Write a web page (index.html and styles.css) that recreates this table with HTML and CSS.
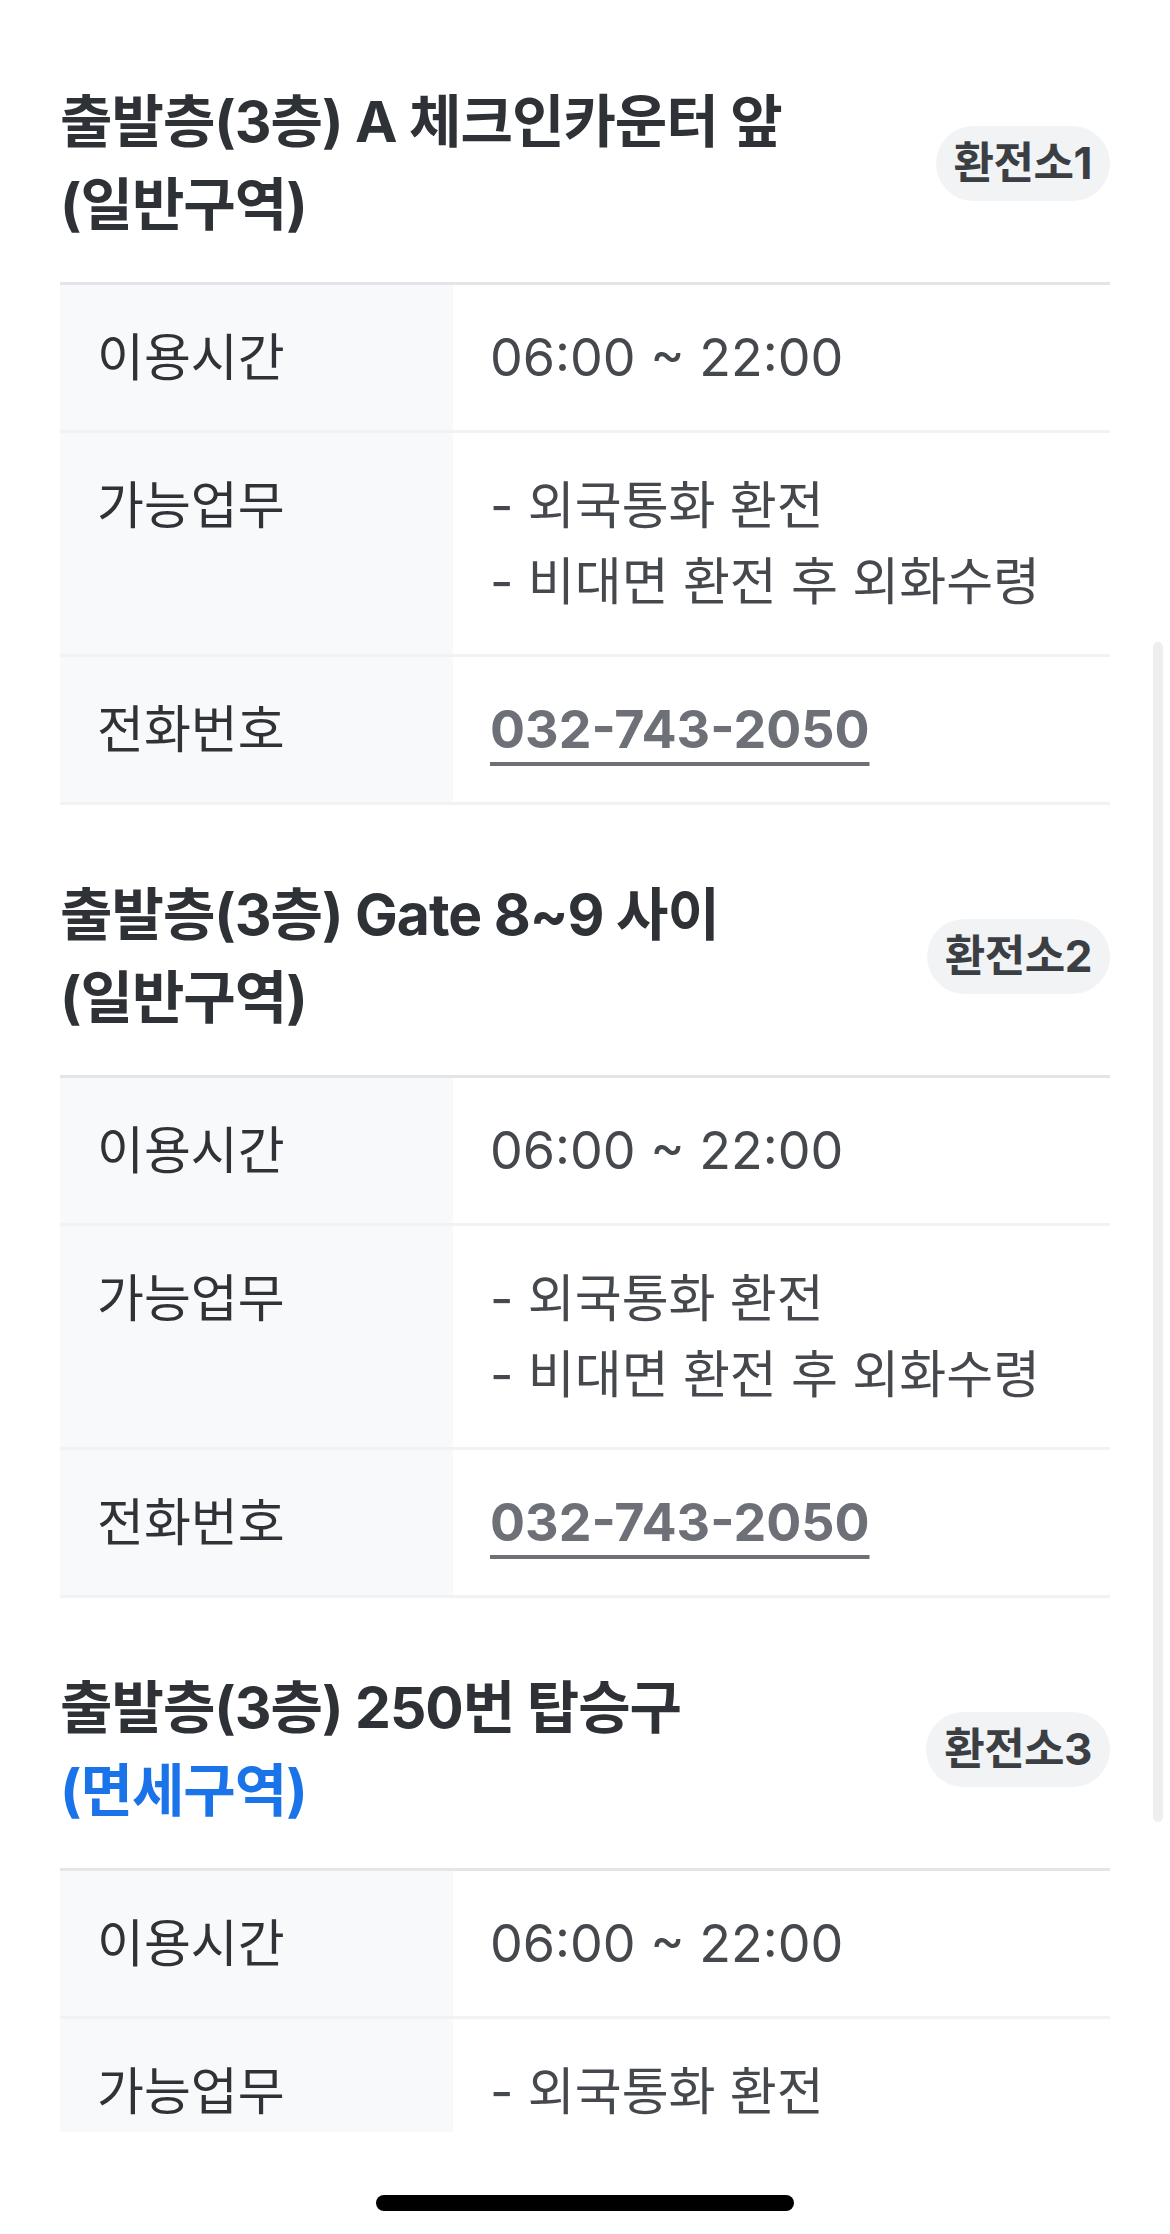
FILE: index.html
```html
<!DOCTYPE html>
<html lang="ko">
  <head>
    <meta charset="UTF-8" />
    <meta name="viewport" content="width=device-width, initial-scale=1.0" />
    <title>환전소 안내</title>
    <link rel="stylesheet" href="styles.css">
  </head>
  <body>
    <main class="page">
      <section class="exchange">
        <div class="exchange-head">
          <h2 class="exchange-title">출발층(3층) A 체크인카운터 앞 <span class="zone">(일반구역)</span></h2>
          <span class="badge">환전소1</span>
        </div>
        <table class="info">
          <tr>
            <th>이용시간</th>
            <td><span class="num">06:00 ~ 22:00</span></td>
          </tr>
          <tr>
            <th>가능업무</th>
            <td>- 외국통화 환전<br />- 비대면 환전 후 외화수령</td>
          </tr>
          <tr>
            <th>전화번호</th>
            <td><a class="tel num" href="tel:032-743-2050">032-743-2050</a></td>
          </tr>
        </table>
      </section>

      <section class="exchange">
        <div class="exchange-head">
          <h2 class="exchange-title">출발층(3층) Gate 8~9 사이 <span class="zone">(일반구역)</span></h2>
          <span class="badge">환전소2</span>
        </div>
        <table class="info">
          <tr>
            <th>이용시간</th>
            <td><span class="num">06:00 ~ 22:00</span></td>
          </tr>
          <tr>
            <th>가능업무</th>
            <td>- 외국통화 환전<br />- 비대면 환전 후 외화수령</td>
          </tr>
          <tr>
            <th>전화번호</th>
            <td><a class="tel num" href="tel:032-743-2050">032-743-2050</a></td>
          </tr>
        </table>
      </section>

      <section class="exchange">
        <div class="exchange-head">
          <h2 class="exchange-title">출발층(3층) 250번 탑승구 <span class="zone duty-free">(면세구역)</span></h2>
          <span class="badge">환전소3</span>
        </div>
        <table class="info">
          <tr>
            <th>이용시간</th>
            <td><span class="num">06:00 ~ 22:00</span></td>
          </tr>
          <tr>
            <th>가능업무</th>
            <td>- 외국통화 환전<br />- 비대면 환전 후 외화수령</td>
          </tr>
          <tr>
            <th>전화번호</th>
            <td><a class="tel num" href="tel:032-743-2050">032-743-2050</a></td>
          </tr>
        </table>
      </section>
    </main>

    <div class="scroll-indicator"></div>

    <footer class="home-bar">
      <div class="home-indicator"></div>
    </footer>
  </body>
</html>
```

FILE: styles.css
```css
* {
  margin: 0;
  padding: 0;
  box-sizing: border-box;
}
html,
body {
  height: 100%;
  overflow: hidden;
}
body {
  font-family: Inter, "Noto Sans CJK KR", sans-serif;
  background-color: #ffffff;
  color: #313539;
  display: flex;
  flex-direction: column;
}
.page {
  flex: 1;
  min-height: 0;
  overflow-y: auto;
  scrollbar-width: none;
  padding: 80px 60px 60px;
}
.exchange {
  margin-bottom: 68px;
}
.exchange-head {
  display: flex;
  justify-content: space-between;
  align-items: center;
  gap: 40px;
  margin-bottom: 36px;
}
.exchange-title {
  font-size: 57px;
  line-height: 83px;
  font-weight: 700;
  letter-spacing: -1px;
  color: #2e3236;
}
.zone {
  display: block;
}
.zone.duty-free {
  color: #1a73e8;
}
.badge {
  flex-shrink: 0;
  height: 75px;
  line-height: 75px;
  padding: 0 18px;
  border-radius: 38px;
  background-color: #f1f3f5;
  font-size: 44px;
  font-weight: 700;
  letter-spacing: -0.5px;
  color: #3b3f44;
}
.info {
  width: 100%;
  border-collapse: collapse;
  border-top: 3px solid #e3e5e8;
}
.info tr {
  border-bottom: 3px solid #f0f2f4;
}
.info th,
.info td {
  padding: 35px 37px 34px;
  font-size: 51px;
  line-height: 76px;
  font-weight: 400;
  text-align: left;
  vertical-align: top;
}
.info th {
  width: 393px;
  background-color: #f7f9fa;
  color: #2f3337;
}
.info td {
  color: #45494e;
}
.num {
  font-size: 52px;
  line-height: 1;
}
.tel {
  color: #6d7177;
  font-weight: 700;
  text-decoration: underline;
  text-decoration-thickness: 4px;
  text-underline-offset: 14px;
}
.scroll-indicator {
  position: fixed;
  top: 642px;
  right: 7px;
  width: 10px;
  height: 1180px;
  border-radius: 5px;
  background-color: #eeeeee;
}
.home-bar {
  flex-shrink: 0;
  height: 102px;
  background-color: #ffffff;
  display: flex;
  justify-content: center;
  padding-top: 63px;
}
.home-indicator {
  width: 418px;
  height: 16px;
  border-radius: 8px;
  background-color: #000000;
}
```
